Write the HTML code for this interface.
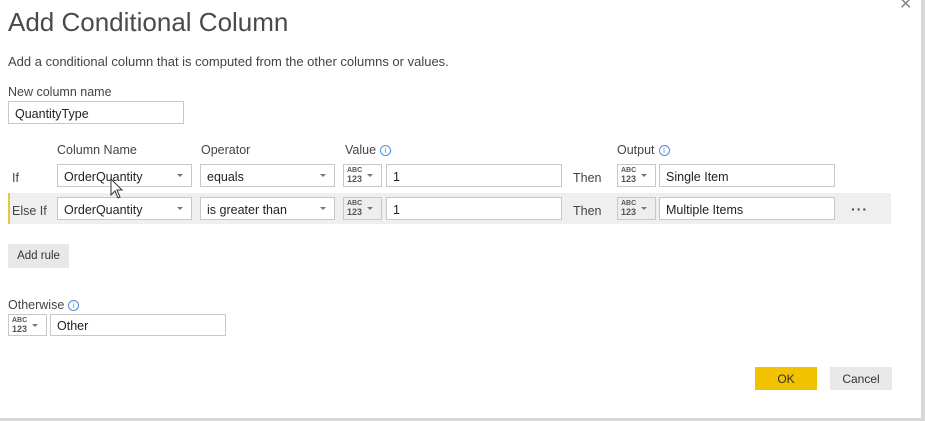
<!DOCTYPE html>
<html><head><style>
*{box-sizing:border-box;margin:0;padding:0}
body{width:925px;height:421px;background:#fff;font-family:"Liberation Sans",sans-serif;color:#333;position:relative;overflow:hidden}
.a{position:absolute}
.t{font-size:12.5px;color:#444}
.in{position:absolute;border:1px solid #c8c8c8;background:#fff;height:23px;font-size:12.5px;padding:5px 6px 0;color:#222;white-space:nowrap}
.dd::after{content:"";position:absolute;right:8px;top:9px;border-left:3px solid transparent;border-right:3px solid transparent;border-top:3px solid #777}
.ty{position:absolute;border:1px solid #c8c8c8;background:#fff;height:23px;width:39px}
.ty b{position:absolute;left:3px;top:2px;font-size:7px;line-height:7px;font-weight:bold;color:#555}
.ty i{position:absolute;left:3px;top:10px;font-size:9px;line-height:9px;font-style:normal;font-weight:bold;color:#555}
.ty::after{content:"";position:absolute;right:8px;top:9px;border-left:3px solid transparent;border-right:3px solid transparent;border-top:3px solid #777}
.info{display:inline-block;width:11px;height:11px;border:1px solid #4a90d9;border-radius:50%;font-size:8px;line-height:9px;text-align:center;color:#4a90d9;vertical-align:1px;margin-left:4px}
</style></head><body>
<div class="a" style="left:921px;top:0;width:4px;height:421px;background:#d8d8d8"></div>
<div class="a" style="left:0;top:418px;width:925px;height:3px;background:#d8d8d8"></div>
<div class="a" style="left:899px;top:-6px;font-size:16px;color:#888">✕</div>
<div class="a" style="left:8px;top:7px;font-size:26px;color:#4a4a4a">Add Conditional Column</div>
<div class="a t" style="left:8px;top:54px;font-size:13px">Add a conditional column that is computed from the other columns or values.</div>
<div class="a t" style="left:8px;top:85px">New column name</div>
<div class="in" style="left:8px;top:101px;width:176px">QuantityType</div>
<div class="a t" style="left:57px;top:143px">Column Name</div>
<div class="a t" style="left:201px;top:143px">Operator</div>
<div class="a t" style="left:345px;top:143px">Value<span class="info">i</span></div>
<div class="a t" style="left:617px;top:143px">Output<span class="info">i</span></div>
<div class="a" style="left:8px;top:193px;width:883px;height:31px;background:#efefef;border-left:2px solid #e8c447"></div>
<div class="a t" style="left:12px;top:171px">If</div>
<div class="in dd" style="left:57px;top:164px;width:135px">OrderQuantity</div>
<div class="in dd" style="left:200px;top:164px;width:135px">equals</div>
<div class="ty" style="left:343px;top:164px"><b>ABC</b><i>123</i></div>
<div class="in" style="left:386px;top:164px;width:176px">1</div>
<div class="a t" style="left:573px;top:171px">Then</div>
<div class="ty" style="left:617px;top:164px"><b>ABC</b><i>123</i></div>
<div class="in" style="left:659px;top:164px;width:176px">Single Item</div>
<div class="a t" style="left:12px;top:204px">Else If</div>
<div class="in dd" style="left:57px;top:197px;width:135px">OrderQuantity</div>
<div class="in dd" style="left:200px;top:197px;width:135px">is greater than</div>
<div class="ty" style="left:343px;top:197px;background:#eee"><b>ABC</b><i>123</i></div>
<div class="in" style="left:386px;top:197px;width:176px">1</div>
<div class="a t" style="left:573px;top:204px">Then</div>
<div class="ty" style="left:617px;top:197px;background:#eee"><b>ABC</b><i>123</i></div>
<div class="in" style="left:659px;top:197px;width:176px">Multiple Items</div>
<div class="a" style="left:851px;top:201px;font-size:14px;font-weight:bold;color:#444;letter-spacing:1px">···</div>
<svg class="a" style="left:110px;top:178px" width="16" height="24"><path d="M1 1 L1 17 L5 13 L8 20 L10 19 L7 12 L12 12 Z" fill="#fff" stroke="#333" stroke-width="1"/></svg>
<div class="a" style="left:8px;top:244px;width:61px;height:24px;background:#e8e8e8;font-size:11.5px;text-align:center;line-height:25px;color:#333">Add rule</div>
<div class="a t" style="left:8px;top:298px">Otherwise<span class="info">i</span></div>
<div class="ty" style="left:8px;top:314px;height:22px"><b>ABC</b><i>123</i></div>
<div class="in" style="left:50px;top:314px;width:176px;height:22px;padding-top:4px">Other</div>
<div class="a" style="left:755px;top:367px;width:62px;height:23px;background:#f2c200;font-size:12px;text-align:center;line-height:24px;color:#333">OK</div>
<div class="a" style="left:830px;top:367px;width:62px;height:23px;background:#e8e8e8;font-size:12px;text-align:center;line-height:24px;color:#333">Cancel</div>
</body></html>
